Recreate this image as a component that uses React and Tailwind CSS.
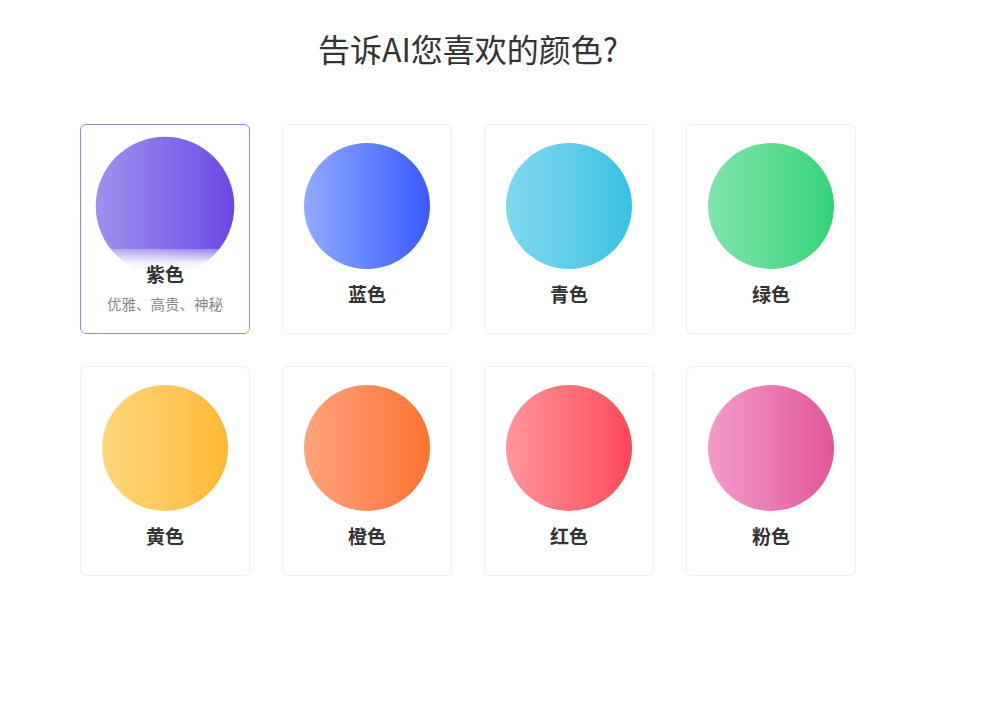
import React from 'react';

const colors = [
  { name: '紫色', desc: '优雅、高贵、神秘', from: 'from-[#a290ec]', to: 'to-[#6d45e6]' },
  { name: '蓝色', desc: '冷静、信任、专业', from: 'from-[#93a8ff]', to: 'to-[#3b57ff]' },
  { name: '青色', desc: '清新、活力、自由', from: 'from-[#80d8ef]', to: 'to-[#36c1e4]' },
  { name: '绿色', desc: '自然、健康、生机', from: 'from-[#80e3ad]', to: 'to-[#2dd479]' },
  { name: '黄色', desc: '温暖、快乐、明亮', from: 'from-[#ffd67c]', to: 'to-[#ffb930]' },
  { name: '橙色', desc: '热情、活泼、创意', from: 'from-[#ffa37c]', to: 'to-[#ff7230]' },
  { name: '红色', desc: '热烈、激情、力量', from: 'from-[#ff949c]', to: 'to-[#ff4558]' },
  { name: '粉色', desc: '浪漫、温柔、甜美', from: 'from-[#f19ccb]', to: 'to-[#e15598]' },
];

const ColorCard = ({ color, selected, onClick }) => {
  return (
    <button
      type="button"
      onClick={onClick}
      className={`relative w-[170px] h-[210px] rounded-md bg-white border flex flex-col items-center pt-[18px] overflow-hidden ${
        selected ? 'border-[#a27fdc]' : 'border-[#efefef]'
      }`}
    >
      <div
        className={`w-[126px] h-[126px] shrink-0 rounded-full bg-gradient-to-r ${color.from} ${color.to} ${
          selected ? 'scale-110' : ''
        }`}
      />
      {selected ? (
        <div className="absolute left-0 right-0 bottom-0 top-[124px] flex flex-col items-center pt-[13px] bg-[linear-gradient(to_bottom,rgba(255,255,255,0.3),rgba(255,255,255,0.9)_14px,#fff_22px)]">
          <span className="text-[19px] leading-[24px] font-bold text-[#333]">{color.name}</span>
          <span className="mt-[9px] text-[14.5px] leading-[18px] text-[#888]">{color.desc}</span>
        </div>
      ) : (
        <span className="mt-[13px] text-[19px] leading-[24px] font-bold text-[#333]">{color.name}</span>
      )}
    </button>
  );
};

export default function App() {
  const [selected, setSelected] = React.useState(0);

  return (
    <div
      className="min-h-screen bg-white"
      style={{ fontFamily: '"Noto Sans CJK SC", "Noto Sans", sans-serif' }}
    >
      <div className="ml-[80px] w-[776px] pt-[28px]">
        <h1 className="text-center text-[32px] leading-[40px] font-normal text-[#333]">
          告诉AI您喜欢的颜色?
        </h1>
        <div className="mt-[56px] grid grid-cols-4 gap-[32px]">
          {colors.map((c, i) => (
            <ColorCard key={c.name} color={c} selected={i === selected} onClick={() => setSelected(i)} />
          ))}
        </div>
      </div>
    </div>
  );
}
